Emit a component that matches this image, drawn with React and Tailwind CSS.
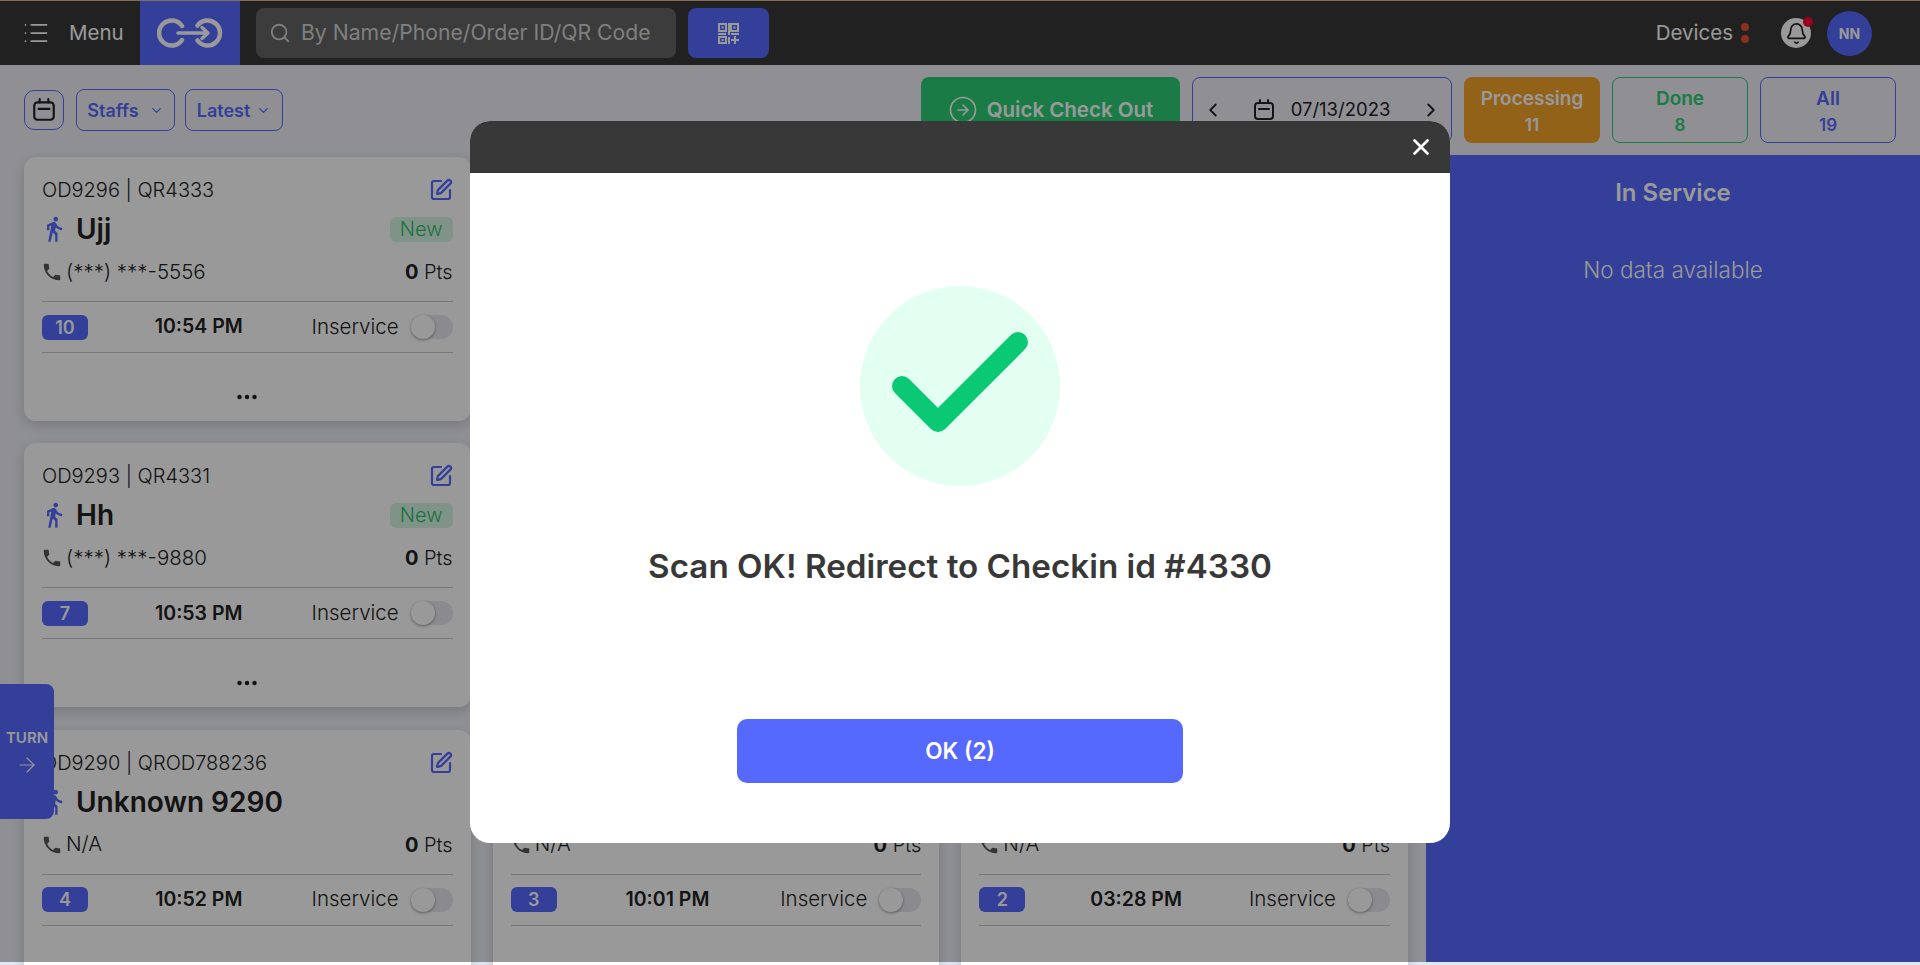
import { List, Search, ChevronDown, ChevronLeft, ChevronRight, CircleArrowRight, SquarePen, Bell, X, ArrowRight } from 'lucide-react'
import { MdDirectionsWalk, MdPhone } from 'react-icons/md'
import { BsThreeDots } from 'react-icons/bs'

const columns = [
  [
    { order: 'OD9296', qr: 'QR4333', name: 'Ujj', phone: '(***) ***-5556', turn: 10, time: '10:54 PM', isNew: true },
    { order: 'OD9293', qr: 'QR4331', name: 'Hh', phone: '(***) ***-9880', turn: 7, time: '10:53 PM', isNew: true },
    { order: 'OD9290', qr: 'QROD788236', name: 'Unknown 9290', phone: 'N/A', turn: 4, time: '10:52 PM' },
  ],
  [
    { order: 'OD9295', qr: 'QR4332', name: 'Unknown 9295', phone: 'N/A', turn: 9, time: '10:54 PM' },
    { order: 'OD9292', qr: 'QR4330', name: 'Unknown 9292', phone: 'N/A', turn: 6, time: '10:53 PM' },
    { order: 'OD9289', qr: 'QR4328', name: 'Unknown 9289', phone: 'N/A', turn: 3, time: '10:01 PM' },
  ],
  [
    { order: 'OD9294', qr: 'QR4332', name: 'Unknown 9294', phone: 'N/A', turn: 8, time: '10:54 PM' },
    { order: 'OD9291', qr: 'QR4329', name: 'Unknown 9291', phone: 'N/A', turn: 5, time: '10:52 PM' },
    { order: 'OD9288', qr: 'QR4327', name: 'Unknown 9288', phone: 'N/A', turn: 2, time: '03:28 PM' },
  ],
]

function CalendarIcon({ className }) {
  return (
    <svg viewBox="0 0 24 24" fill="none" stroke="currentColor" strokeWidth="2" strokeLinecap="round" className={className}>
      <rect x="3" y="5" width="18" height="16" rx="3" />
      <path d="M8 2v3M16 2v3M7 11h10" />
    </svg>
  )
}

function Logo() {
  return (
    <svg viewBox="0 0 66 30" fill="none" stroke="white" strokeWidth="4.5" strokeLinecap="round" strokeLinejoin="round" className="w-[66px] h-[30px]">
      <path d="M25 8a12.5 12.5 0 1 0 0 14" />
      <path d="M40.5 7.5a12.5 12.5 0 1 1 0 15" />
      <path d="M21 15h30M45 9.5l6 5.5-6 5.5" strokeWidth="3.5" />
    </svg>
  )
}

function QrIcon() {
  return (
    <svg viewBox="0 0 21 21" fill="none" stroke="currentColor" className="w-[21px] h-[21px]">
      <rect x="1" y="1" width="7" height="7" strokeWidth="2" />
      <rect x="13" y="1" width="7" height="7" strokeWidth="2" />
      <rect x="1" y="14" width="7" height="6" strokeWidth="2" />
      <g fill="currentColor" stroke="none">
        <rect x="3.5" y="3.5" width="2" height="2" />
        <rect x="15.5" y="3.5" width="2" height="2" />
        <rect x="3.5" y="16" width="2" height="2" />
        <rect x="0" y="10" width="8" height="2" />
        <rect x="10" y="0" width="2" height="12" />
        <rect x="13" y="10" width="8" height="2" />
        <rect x="10" y="14" width="2" height="7" />
        <rect x="13" y="16" width="8" height="2" />
        <rect x="16" y="13" width="2" height="8" />
      </g>
    </svg>
  )
}

function OrderCard({ order }) {
  return (
    <div className="h-[264px] shrink-0 rounded-xl bg-white px-[18px] pt-[22px] shadow-[0_4px_14px_rgba(0,0,0,0.18)] flex flex-col text-[#222]">
      <div className="flex items-center justify-between h-[22px]">
        <span className="text-[20px] font-light">{order.order} | {order.qr}</span>
        <SquarePen className="w-[24px] h-[24px] text-[#5569ff]" strokeWidth={2.2} />
      </div>
      <div className="flex items-center justify-between h-[30px] mt-[13px]">
        <div className="flex items-center gap-[8px]">
          <MdDirectionsWalk className="w-[28px] h-[30px] text-[#5569ff] -ml-[2px]" />
          <span className="text-[28px] font-semibold leading-none">{order.name}</span>
        </div>
        {order.isNew && <span className="w-[63px] h-[25px] rounded-md bg-[#d5f5e3] text-[#2dbd70] text-[20px] font-light flex items-center justify-center">New</span>}
      </div>
      <div className="flex items-center justify-between h-[24px] mt-[16px]">
        <div className="flex items-center gap-[3px] font-light">
          <MdPhone className="w-[22px] h-[22px] text-[#555] -ml-[1px]" />
          <span className="text-[20.5px]">{order.phone}</span>
        </div>
        <span className="font-light text-[20px]"><b className="font-bold">0</b> Pts</span>
      </div>
      <div className="flex items-center justify-between h-[52px] mt-[17px] border-y border-[#c8c8c8]">
        <span className="w-[46px] h-[25px] rounded-md bg-[#5569ff] text-white text-[18px] font-semibold flex items-center justify-center">{order.turn}</span>
        <span className="text-[19.5px] font-semibold -ml-[2px]">{order.time}</span>
        <div className="flex items-center gap-[12px]">
          <span className="text-[20.5px] font-light">Inservice</span>
          <div className="w-[42px] h-[24px] rounded-full bg-[#e8e8ee] flex items-center">
            <div className="w-[24px] h-[24px] rounded-full bg-white shadow-[0_1px_3px_rgba(0,0,0,0.4)]" />
          </div>
        </div>
      </div>
      <div className="flex justify-center mt-[32px]">
        <BsThreeDots className="w-[24px] h-[24px] text-[#222]" />
      </div>
    </div>
  )
}

function StatusTab({ label, count, className }) {
  return (
    <div className={`w-[136px] h-[66px] rounded-lg flex flex-col items-center justify-center gap-[3px] pt-[2px] font-semibold ${className}`}>
      <span className="text-[19px] leading-[24px]">{label}</span>
      <span className="text-[17px] leading-[22px]">{count}</span>
    </div>
  )
}

export default function App() {
  return (
    <div className="relative w-full h-[965px] overflow-hidden flex flex-col bg-[#f0f1f7] font-[Inter,sans-serif]">
      <div className="h-[65px] shrink-0 bg-[#383838] border-t border-[#e0b38a] flex items-center text-white">
        <div className="w-[140px] flex items-center pl-[22px] gap-[19px]">
          <List className="w-[28px] h-[28px]" strokeWidth={1.5} />
          <span className="text-[20.5px]">Menu</span>
        </div>
        <div className="w-[100px] h-full bg-[#5569ff] flex items-center justify-center">
          <Logo />
        </div>
        <div className="ml-[16px] w-[420px] h-[50px] rounded-lg bg-[#646464] flex items-center pl-[13px] gap-[10px]">
          <Search className="w-[22px] h-[22px] text-[#d4d4d4]" />
          <span className="text-[21.2px] text-[#d4d4d4]">By Name/Phone/Order ID/QR Code</span>
        </div>
        <div className="ml-[12px] w-[81px] h-[50px] rounded-lg bg-[#5569ff] flex items-center justify-center">
          <QrIcon />
        </div>
        <div className="ml-auto flex items-center">
          <span className="text-[20.5px]">Devices</span>
          <div className="ml-[8px] flex flex-col gap-[4px]">
            <span className="w-[8px] h-[8px] rounded-full bg-[#e65032]" />
            <span className="w-[8px] h-[8px] rounded-full bg-[#e65032]" />
          </div>
          <div className="relative ml-[32px] w-[30px] h-[30px] rounded-full bg-white flex items-center justify-center text-[#222]">
            <Bell className="w-[23px] h-[23px]" strokeWidth={1.8} />
            <span className="absolute -top-[1px] -right-[2px] w-[10px] h-[10px] rounded-full bg-[#ff0033]" />
          </div>
          <div className="ml-[16px] mr-[48px] w-[45px] h-[45px] rounded-full bg-[#5569ff] flex items-center justify-center text-[14px] font-bold">NN</div>
        </div>
      </div>

      <div className="relative flex-1 min-h-0 flex flex-col">
        <div className="h-[90px] shrink-0 flex items-center pl-[24px] pr-[24px]">
          <div className="w-[40px] h-[40px] rounded-[10px] border border-[#5569ff] flex items-center justify-center text-[#222]">
            <CalendarIcon className="w-[26px] h-[26px]" />
          </div>
          <div className="ml-[12px] w-[99px] h-[42px] rounded-lg border border-[#5569ff] flex items-center justify-center gap-[10px] text-[#5569ff] text-[18px] font-semibold">
            Staffs <ChevronDown className="w-[15px] h-[15px]" />
          </div>
          <div className="ml-[10px] w-[98px] h-[42px] rounded-lg border border-[#5569ff] flex items-center justify-center gap-[6px] text-[#5569ff] text-[18px] font-semibold">
            Latest <ChevronDown className="w-[15px] h-[15px]" />
          </div>
          <div className="ml-auto flex items-center gap-[12px]">
            <div className="w-[259px] h-[66px] rounded-lg bg-[#2dcd75] flex items-center justify-center gap-[9px] text-white text-[20.5px] font-semibold">
              <CircleArrowRight className="w-[30px] h-[30px]" strokeWidth={1.3} /> Quick Check Out
            </div>
            <div className="w-[260px] h-[66px] rounded-lg border border-[#5569ff] flex items-center justify-between px-[9px] text-[#222]">
              <ChevronLeft className="w-[22px] h-[22px]" />
              <div className="flex items-center gap-[15px] -ml-[2px]">
                <CalendarIcon className="w-[24px] h-[24px]" />
                <span className="text-[18.5px]">07/13/2023</span>
              </div>
              <ChevronRight className="w-[22px] h-[22px]" />
            </div>
            <StatusTab label="Processing" count="11" className="bg-[#f5a32a] text-white" />
            <StatusTab label="Done" count="8" className="border border-[#2dcd75] text-[#2dcd75]" />
            <StatusTab label="All" count="19" className="border border-[#5569ff] text-[#5569ff]" />
          </div>
        </div>

        <div className="flex-1 min-h-0 flex">
          <div className="flex-1 min-w-0 flex gap-[22px] pl-[24px] pt-[2px] pr-[18px]">
            {columns.map((col, i) => (
              <div key={i} className="flex-1 flex flex-col gap-[22.4px]">
                {col.map((o) => <OrderCard key={o.order} order={o} />)}
              </div>
            ))}
          </div>
          <div className="w-[494px] shrink-0 bg-[#5569ff] flex flex-col items-center pt-[21px] text-white">
            <span className="text-[24px] font-semibold leading-[34px]">In Service</span>
            <span className="mt-[45px] text-[22.5px] font-light leading-[30px]">No data available</span>
          </div>
        </div>

        <div className="absolute left-0 top-[619px] w-[54px] h-[135px] rounded-r-lg bg-[#5569ff] flex flex-col items-center pt-[43px] text-white">
          <span className="text-[15px] font-semibold leading-[22px]">TURN</span>
          <ArrowRight className="mt-[4px] w-[24px] h-[24px]" strokeWidth={1.1} />
        </div>
      </div>

      <div className="h-[3px] shrink-0 bg-[#dfe9f5]" />

      <div className="absolute inset-x-0 top-0 bottom-[3px] bg-black/40 flex justify-center pt-[121px]">
        <div className="w-[980px] h-[722px] rounded-[20px] overflow-hidden bg-white flex flex-col">
          <div className="h-[52px] shrink-0 bg-[#383838] flex items-center justify-end pr-[16px]">
            <X className="w-[26px] h-[26px] text-white" strokeWidth={2.5} />
          </div>
          <div className="flex-1 flex flex-col items-center pt-[113px]">
            <div className="w-[200px] h-[200px] rounded-full bg-[#e2fff1] flex items-center justify-center">
              <svg viewBox="0 0 200 200" fill="none" stroke="#0bc875" strokeWidth="20" strokeLinecap="round" strokeLinejoin="round" className="w-[200px] h-[200px]">
                <path d="M42 100l36 36 80-80" />
              </svg>
            </div>
            <h2 className="mt-[59px] text-[33.2px] leading-[42px] font-semibold text-[#383838]">Scan OK! Redirect to Checkin id #4330</h2>
            <button className="mt-[132px] w-[446px] h-[64px] rounded-[10px] bg-[#5569ff] text-white text-[22.5px] font-semibold">OK (2)</button>
          </div>
        </div>
      </div>
    </div>
  )
}
